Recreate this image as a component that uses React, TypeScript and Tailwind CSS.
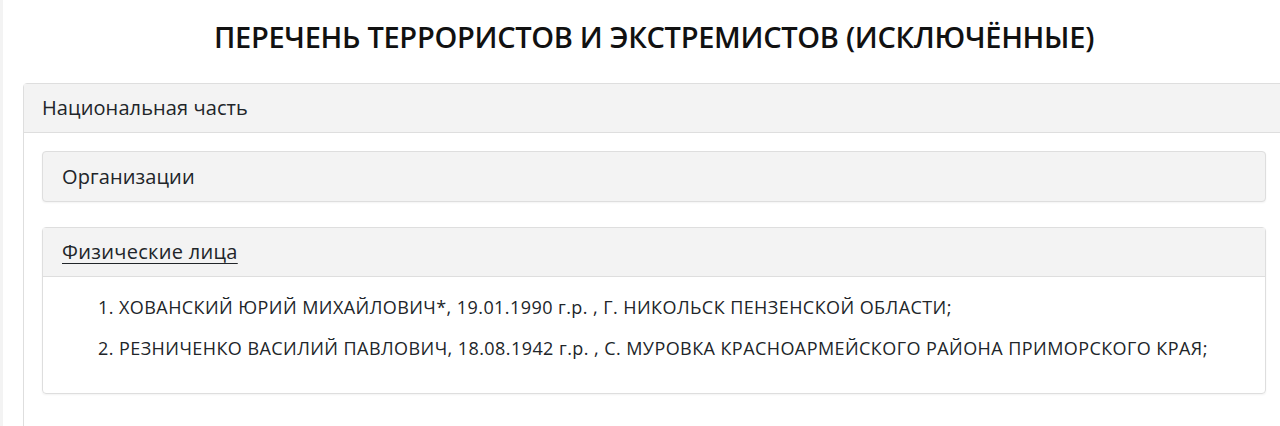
import React from 'react';

const people = [
  'ХОВАНСКИЙ ЮРИЙ МИХАЙЛОВИЧ*, 19.01.1990 г.р. , Г. НИКОЛЬСК ПЕНЗЕНСКОЙ ОБЛАСТИ;',
  'РЕЗНИЧЕНКО ВАСИЛИЙ ПАВЛОВИЧ, 18.08.1942 г.р. , С. МУРОВКА КРАСНОАРМЕЙСКОГО РАЙОНА ПРИМОРСКОГО КРАЯ;',
];

const App: React.FC = () => {
  return (
    <div
      className="h-[426px] w-[1280px] overflow-hidden bg-white border-l-[3px] border-[#f3f3f3] text-[#212529]"
      style={{ fontFamily: '"Open Sans", "Noto Sans", sans-serif' }}
    >
      <div className="ml-[20px] w-[1262px]">
        {/* Page title */}
        <h1 className="pt-[17px] h-[83px] text-center text-[29px] font-semibold tracking-[-0.3px] leading-[40px] text-[#111]">
          ПЕРЕЧЕНЬ ТЕРРОРИСТОВ И ЭКСТРЕМИСТОВ (ИСКЛЮЧЁННЫЕ)
        </h1>

        {/* National section */}
        <div className="border border-[#dedede] rounded-t-[4px]">
          <div className="h-[49px] flex items-center px-[18px] bg-[#f3f3f3] border-b border-[#dedede] text-[20px] tracking-[0.1px]">
            Национальная часть
          </div>

          <div className="px-[18px] pt-[18px] pb-[40px]">
            {/* Organisations */}
            <div className="h-[51px] flex items-center px-[19px] bg-[#f3f3f3] border border-[#dedede] rounded-[4px] shadow-[0_1px_2px_rgba(0,0,0,0.05)] text-[20px] tracking-[0.1px]">
              Организации
            </div>

            {/* Individuals */}
            <div className="mt-[25px] border border-[#dedede] rounded-[4px] shadow-[0_1px_2px_rgba(0,0,0,0.05)]">
              <div className="h-[49px] flex items-center px-[19px] bg-[#f3f3f3] border-b border-[#dedede] text-[20px] tracking-[0.3px]">
                <span className="underline underline-offset-[4px] decoration-[1px]">Физические лица</span>
              </div>
              <ol className="pl-[55px] pt-[18px] pb-[16px] text-[18px] tracking-[0.43px] leading-[24px]">
                {people.map((p, i) => (
                  <li key={i} className="mb-[17px]">
                    {i + 1}. {p}
                  </li>
                ))}
              </ol>
            </div>
          </div>
        </div>
      </div>
    </div>
  );
};

export default App;
